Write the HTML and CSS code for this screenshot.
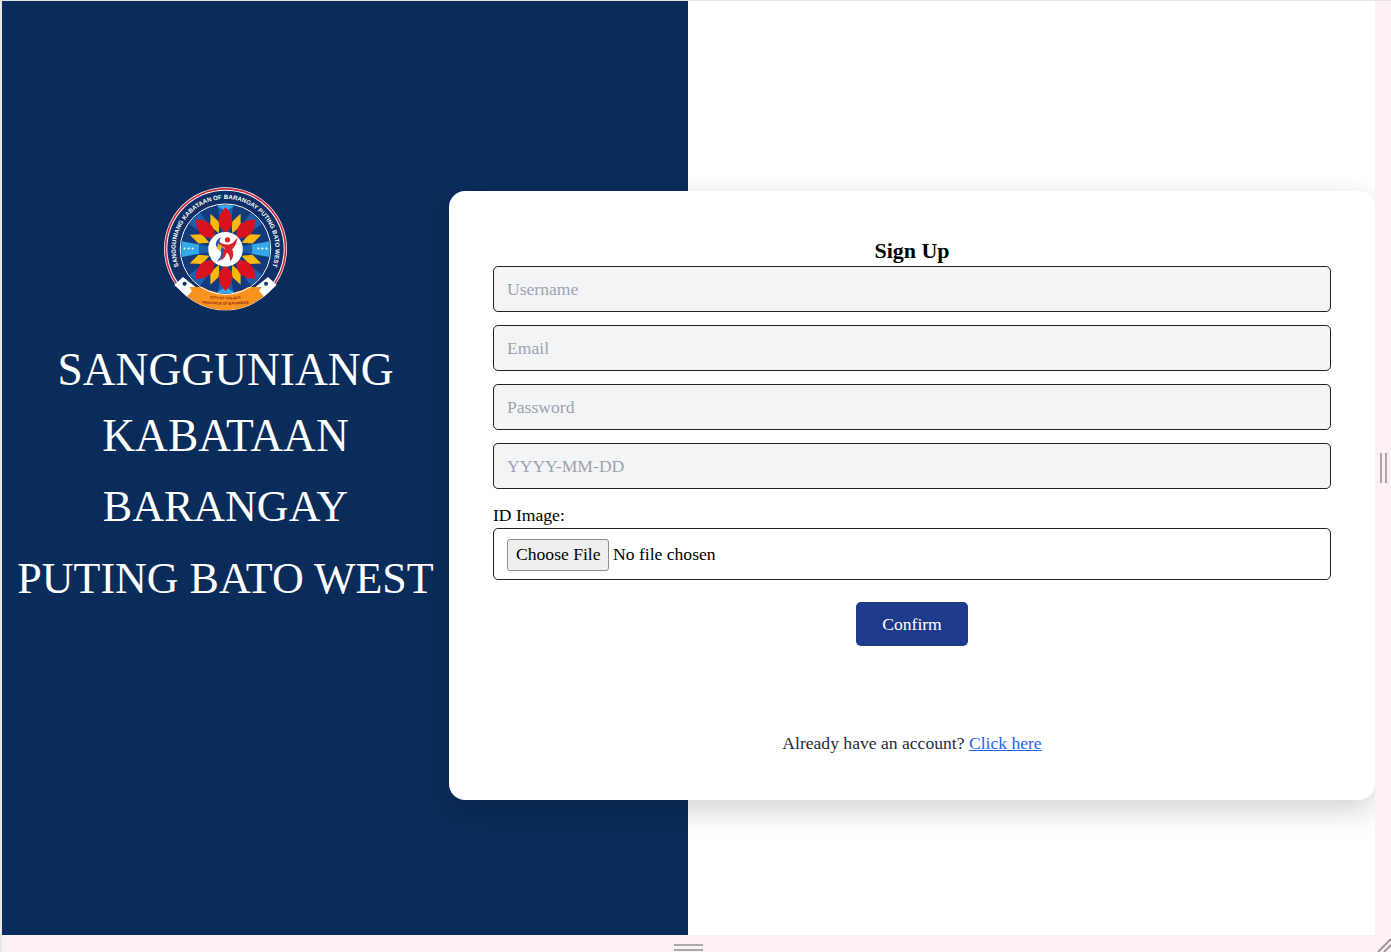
FILE: index.html
```html
<!DOCTYPE html>
<html lang="en">
<head>
<meta charset="UTF-8">
<meta name="viewport" content="width=device-width, initial-scale=1.0">
<title>Sign Up</title>
<link rel="stylesheet" href="styles.css">
</head>
<body>
<div class="window">
  <main class="screen">
    <section class="brand">
      <div class="brand-inner">
        <svg class="logo" viewBox="38 35 376 376" aria-label="Sangguniang Kabataan seal">
          <defs>
            <path id="ringText" d="M 105 310 A 150 150 0 1 1 347 310"/>
            <path id="cityText" d="M 168 369 Q 226 377 284 369"/>
            <path id="provText" d="M 140 383 Q 226 395 312 383"/>
            <path id="redPetal" d="M226 172 C198 154 198 124 226 96 C254 124 254 154 226 172 Z"/>
            <path id="yellowPetal" d="M226 170 L211 140 L226 106 L241 140 Z"/>
            <clipPath id="inside"><circle cx="226" cy="222" r="133"/></clipPath>
          </defs>
          <circle cx="226" cy="221" r="185" fill="#fff"/>
          <circle cx="226" cy="221" r="183" fill="#c8283c"/>
          <circle cx="226" cy="221" r="178" fill="#fff"/>
          <circle cx="226" cy="221" r="175" fill="#0f2f66"/>
          <path d="M106 346 H346 L352 352 A 175 175 0 0 1 100 352 Z" fill="#f7931e"/>
          <path d="M98 306 L136 336 L110 364 L72 330 Z" fill="#fff"/>
          <path d="M354 306 L316 336 L342 364 L380 330 Z" fill="#fff"/>
          <circle cx="103" cy="326" r="6" fill="#0f2f66"/>
          <circle cx="348" cy="326" r="6" fill="#0f2f66"/>
          <path d="M118 336 H334 L312 376 Q226 404 140 376 Z" fill="#f7931e"/>
          <circle cx="226" cy="222" r="136" fill="none" stroke="#fff" stroke-width="3"/>
          <circle cx="226" cy="222" r="133" fill="#123a7c"/>
          <g clip-path="url(#inside)">
            <g fill="#1c5fae">
              <path d="M226 222 L200 80 L252 80 Z"/>
              <path d="M226 222 L200 80 L252 80 Z" transform="rotate(45 226 222)"/>
              <path d="M226 222 L200 80 L252 80 Z" transform="rotate(90 226 222)"/>
              <path d="M226 222 L200 80 L252 80 Z" transform="rotate(135 226 222)"/>
              <path d="M226 222 L200 80 L252 80 Z" transform="rotate(180 226 222)"/>
              <path d="M226 222 L200 80 L252 80 Z" transform="rotate(225 226 222)"/>
              <path d="M226 222 L200 80 L252 80 Z" transform="rotate(270 226 222)"/>
              <path d="M226 222 L200 80 L252 80 Z" transform="rotate(315 226 222)"/>
            </g>
            <g fill="#35a8ea">
              <path d="M190 86 H262 L226 108 Z"/>
              <path d="M190 358 H262 L226 336 Z"/>
              <path d="M90 198 L146 208 V236 L90 246 Z"/>
              <path d="M362 198 L306 208 V236 L362 246 Z"/>
            </g>
            <g fill="#fff">
              <circle cx="103" cy="220" r="3"/><circle cx="115" cy="220" r="3"/><circle cx="127" cy="220" r="3"/>
              <circle cx="325" cy="220" r="3"/><circle cx="337" cy="220" r="3"/><circle cx="349" cy="220" r="3"/>
            </g>
          </g>
          <g fill="#f8b90f">
            <use href="#yellowPetal" transform="rotate(23 226 222)"/>
            <use href="#yellowPetal" transform="rotate(68 226 222)"/>
            <use href="#yellowPetal" transform="rotate(112 226 222)"/>
            <use href="#yellowPetal" transform="rotate(157 226 222)"/>
            <use href="#yellowPetal" transform="rotate(203 226 222)"/>
            <use href="#yellowPetal" transform="rotate(248 226 222)"/>
            <use href="#yellowPetal" transform="rotate(292 226 222)"/>
            <use href="#yellowPetal" transform="rotate(337 226 222)"/>
          </g>
          <g fill="#d8121f">
            <use href="#redPetal"/>
            <use href="#redPetal" transform="rotate(45 226 222)"/>
            <use href="#redPetal" transform="rotate(135 226 222)"/>
            <use href="#redPetal" transform="rotate(180 226 222)"/>
            <use href="#redPetal" transform="rotate(225 226 222)"/>
            <use href="#redPetal" transform="rotate(315 226 222)"/>
          </g>
          <circle cx="226" cy="222" r="52" fill="#fff"/>
          <path d="M213 186 C194 194 192 214 206 222 C216 228 216 240 200 260 C226 248 232 226 216 214 C206 206 206 196 213 186 Z" fill="#1f5fb4"/>
          <path d="M204 196 C212 206 222 208 232 208 C244 208 254 200 262 186 C260 206 252 216 246 222 C252 236 250 250 240 258 C240 244 236 236 230 232 C226 244 220 252 212 256 C218 242 220 226 224 218 C216 216 208 208 204 196 Z" fill="#d8232a"/>
          <circle cx="232" cy="194" r="8" fill="#d8232a"/>
          <path d="M204 206 L216 214 L210 228 L200 220 Z" fill="#f8b90f"/>
          <text class="ring-text"><textPath href="#ringText" startOffset="50%">SANGGUNIANG KABATAAN OF BARANGAY PUTING BATO WEST</textPath></text>
          <text class="seal-small"><textPath href="#cityText" startOffset="50%">CITY OF CALACA</textPath></text>
          <text class="seal-small"><textPath href="#provText" startOffset="50%">PROVINCE OF BATANGAS</textPath></text>
        </svg>
        <h1 class="brand-title">SANGGUNIANG<br>KABATAAN</h1>
        <h1 class="brand-title brand-title-sub">BARANGAY<br>PUTING BATO WEST</h1>
      </div>
    </section>

    <section class="card">
      <h2 class="card-title">Sign Up</h2>
      <form class="signup">
        <input class="field" type="text" placeholder="Username">
        <input class="field" type="email" placeholder="Email">
        <input class="field" type="password" placeholder="Password">
        <input class="field" type="text" placeholder="YYYY-MM-DD">
        <div class="upload">
          <label class="upload-label" for="idImage">ID Image:</label>
          <input class="upload-input" id="idImage" type="file">
        </div>
        <button class="confirm" type="button">Confirm</button>
      </form>
      <p class="login-hint">Already have an account? <a href="#">Click here</a></p>
    </section>
  </main>

  <div class="grip-side"><span></span><span></span></div>
  <div class="grip-bottom"><span></span><span></span></div>
  <svg class="grip-corner" viewBox="0 0 16 17">
    <path d="M3 17 L16 4 M9 17 L16 10" stroke="#9a9a9a" stroke-width="2" fill="none"/>
  </svg>
</div>
</body>
</html>
```

FILE: styles.css
```css
html, body {
  height: 100%;
  margin: 0;
}

body {
  background-color: #fcf0f5;
  font-family: "Liberation Serif", "Times New Roman", serif;
  overflow: hidden;
}

.window {
  display: grid;
  grid-template-columns: 1373px 16px;
  grid-template-rows: 934px 17px;
  padding-left: 2px;
  border-top: 1px solid #e4e4e4;
  box-shadow: inset 2px 0 0 #ebe6ea;
}

/* panel and card overlap, so they share a grid column */
.screen {
  display: grid;
  grid-template-columns: 447px 239px 687px;
  grid-template-rows: 934px;
  background-color: #fff;
  overflow: hidden;
}

.brand {
  grid-column: 1 / 3;
  grid-row: 1;
  background-color: #092c5a;
}

.brand-inner {
  width: 447px;
  display: flex;
  flex-direction: column;
  align-items: center;
  padding-top: 186px;
  color: #fff;
}

.logo {
  width: 125px;
  height: 125px;
  display: block;
}

.ring-text {
  fill: #fff;
  font-family: "Liberation Sans", Arial, sans-serif;
  font-size: 18.5px;
  font-weight: 700;
  text-anchor: middle;
}

.seal-small {
  fill: #8a1c1c;
  font-family: "Liberation Sans", Arial, sans-serif;
  font-size: 11px;
  font-weight: 700;
  text-anchor: middle;
}

.brand-title {
  margin: 25px 0 0;
  font-size: 45.5px;
  font-weight: 400;
  line-height: 66px;
  text-align: center;
  white-space: nowrap;
}

.brand-title-sub {
  margin-top: 2px;
  font-size: 44px;
  line-height: 72px;
}

.card {
  grid-column: 2 / 4;
  grid-row: 1;
  z-index: 1;
  align-self: start;
  height: 609px;
  margin-top: 190px;
  padding: 46px 44px 0;
  box-sizing: border-box;
  background-color: #fff;
  border-radius: 16px;
  box-shadow: 0 10px 30px rgba(0, 0, 0, 0.18);
}

.card-title {
  margin: 0 0 2px;
  font-size: 22px;
  line-height: 27px;
  font-weight: 700;
  text-align: center;
  color: #000;
}

.signup {
  display: flex;
  flex-direction: column;
}

.field {
  height: 46px;
  margin-bottom: 13px;
  padding: 0 13px;
  box-sizing: border-box;
  background-color: #f3f4f6;
  border: 1px solid #222;
  border-radius: 5px;
  font-family: inherit;
  font-size: 17.6px;
  color: #111;
}

.field::placeholder {
  color: #9ca3af;
  opacity: 1;
}

.upload-label {
  display: block;
  font-size: 17.6px;
  line-height: 27px;
  color: #000;
}

.upload-input {
  display: block;
  width: 100%;
  height: 52px;
  margin-top: -1px;
  padding: 9px 13px;
  box-sizing: border-box;
  border: 1px solid #222;
  border-radius: 5px;
  font-family: inherit;
  font-size: 17.6px;
  line-height: 32px;
  color: #000;
}

.upload-input::file-selector-button {
  width: 102px;
  height: 32px;
  margin: -1px 4px 0 0;
  padding: 0 8px;
  background-color: #efefef;
  border: 1px solid #8f8f8f;
  border-radius: 3px;
  font-family: inherit;
  font-size: 17.6px;
  color: #000;
}

.confirm {
  align-self: center;
  width: 112px;
  height: 44px;
  margin-top: 22px;
  background-color: #1e3a8a;
  border: 0;
  border-radius: 5px;
  font-family: inherit;
  font-size: 17.6px;
  color: #fff;
}

.login-hint {
  margin: 84px 0 0;
  font-size: 17.6px;
  line-height: 27px;
  text-align: center;
  color: #1f2937;
}

.login-hint a {
  color: #2563eb;
}

.grip-side {
  display: flex;
  justify-content: center;
  align-items: center;
  gap: 3px;
  padding-left: 1px;
}

.grip-side span {
  width: 2px;
  height: 30px;
  background-color: #a9a9a9;
}

.grip-bottom {
  display: flex;
  flex-direction: column;
  align-items: center;
  gap: 3px;
  padding-top: 9px;
}

.grip-bottom span {
  width: 29px;
  height: 2px;
  background-color: #a9a9a9;
}

.grip-corner {
  width: 16px;
  height: 17px;
  display: block;
}
```
